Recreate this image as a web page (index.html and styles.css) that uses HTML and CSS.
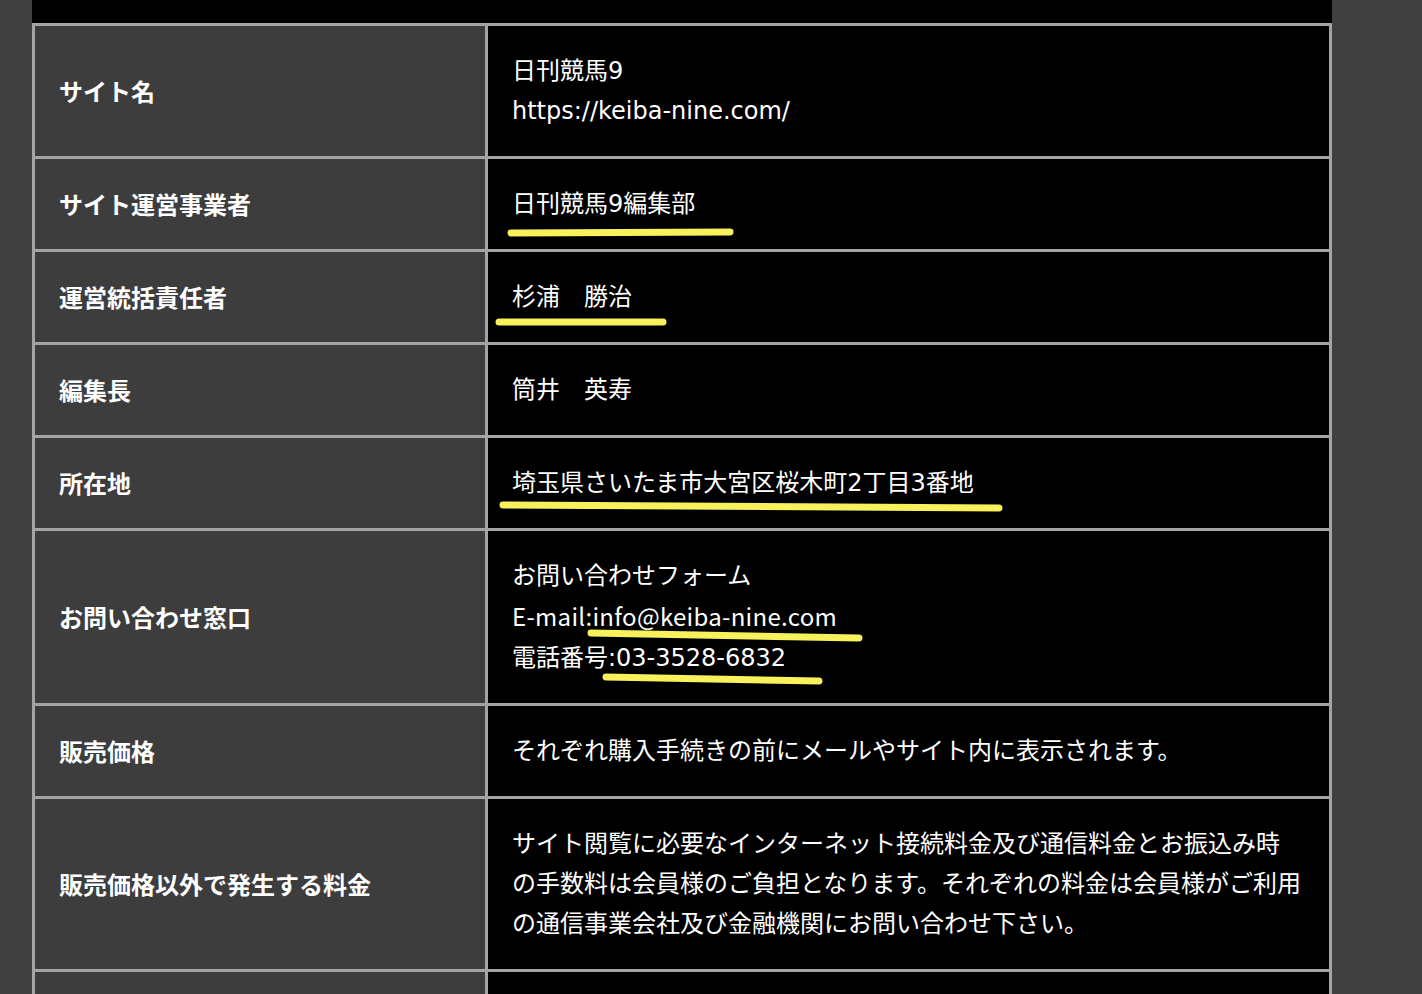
FILE: index.html
```html
<!DOCTYPE html>
<html lang="ja">
<head>
<meta charset="utf-8">
<title>運営者情報</title>
<link rel="stylesheet" href="styles.css">
</head>
<body>
<div class="page">
  <div class="content">
    <table class="info">
      <tbody>
        <tr><th>サイト名</th><td>日刊競馬9<br>https://keiba-nine.com/</td></tr>
        <tr><th>サイト運営事業者</th><td>日刊競馬9編集部</td></tr>
        <tr><th>運営統括責任者</th><td>杉浦　勝治</td></tr>
        <tr><th>編集長</th><td>筒井　英寿</td></tr>
        <tr><th>所在地</th><td>埼玉県さいたま市大宮区桜木町2丁目3番地</td></tr>
        <tr><th>お問い合わせ窓口</th><td>お問い合わせフォーム<br><span class="mail">E-mail:info@keiba-nine.com</span><br>電話番号:03-3528-6832</td></tr>
        <tr><th>販売価格</th><td>それぞれ購入手続きの前にメールやサイト内に表示されます。</td></tr>
        <tr><th>販売価格以外で発生する料金</th><td>サイト閲覧に必要なインターネット接続料金及び通信料金とお振込み時<br>の手数料は会員様のご負担となります。それぞれの料金は会員様がご利用の通信事業会社及び金融機関にお問い合わせ下さい。</td></tr>
        <tr class="next"><th></th><td></td></tr>
      </tbody>
    </table>
  </div>
  <svg class="marks" width="1422" height="994" viewBox="0 0 1422 994" aria-hidden="true">
    <g fill="none" stroke="#f7f15c" stroke-width="7" stroke-linecap="round">
      <path d="M511 233 L730 232"/>
      <path d="M499 322 L663 322"/>
      <path d="M503 505 L999 508"/>
      <path d="M591 633 L859 638"/>
      <path d="M606 677 L819 681"/>
    </g>
  </svg>
</div>
</body>
</html>
```
FILE: styles.css
```css
html, body {
  margin: 0;
  padding: 0;
}
body {
  background: #404040;
  font-family: "DejaVu Sans", "Noto Sans CJK JP", sans-serif;
  color: #fff;
  height: 994px;
  overflow: hidden;
}
.page {
  position: relative;
  width: 1422px;
  height: 994px;
}
.content {
  margin-left: 32px;
  width: 1300px;
  background: #000;
  padding-top: 23px;
}
.info {
  width: 1300px;
  border-collapse: collapse;
  border: 3px solid #a4a4a4;
  table-layout: fixed;
}
.info th,
.info td {
  border: 3px solid #a4a4a4;
  font-size: 24px;
  line-height: 40px;
  vertical-align: middle;
  text-align: left;
}
.info th {
  width: 402px;
  background: #3d3d3d;
  font-family: "Noto Sans CJK JP", sans-serif;
  font-weight: 700;
  padding: 25px 24px 25px 24px;
}
.info td {
  background: #000;
  font-weight: 400;
  padding: 25px 18px 25px 24px;
}
.info .next th,
.info .next td {
  height: 90px;
  padding: 0;
}
.mail {
  font-family: "Noto Sans CJK JP", sans-serif;
  letter-spacing: 0.3px;
}
.marks {
  position: absolute;
  left: 0;
  top: 0;
  pointer-events: none;
}
```
